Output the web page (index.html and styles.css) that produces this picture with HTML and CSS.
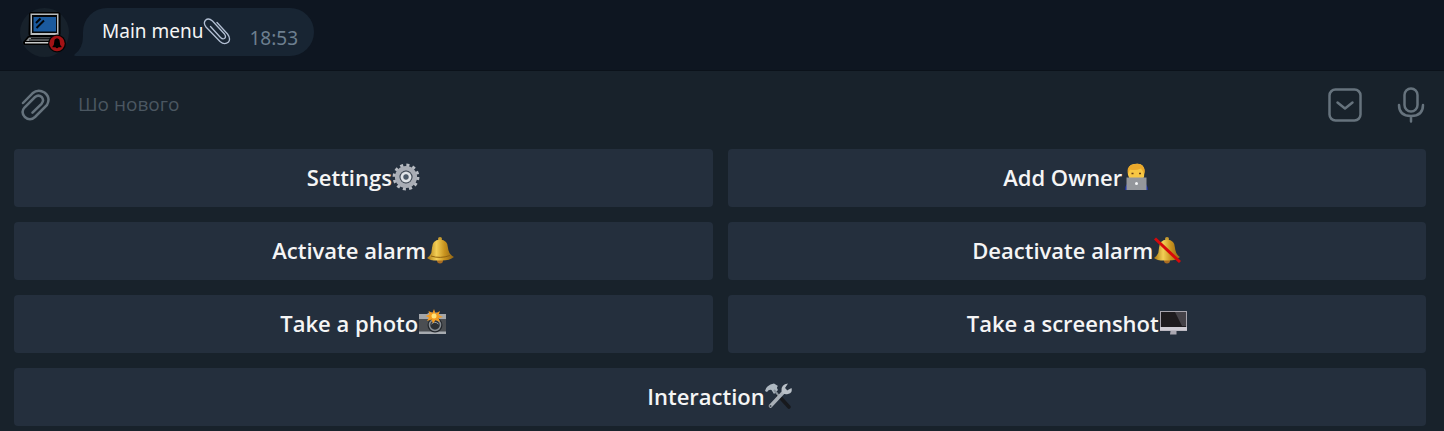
FILE: index.html
```html
<!DOCTYPE html>
<html lang="en">
<head>
<meta charset="utf-8">
<title>Main menu</title>
<link rel="stylesheet" href="styles.css">
</head>
<body>
<main class="chat">
  <svg class="avatar" viewBox="0 0 49 49" aria-hidden="true">
    <circle cx="24.500" cy="24.500" r="24.500" fill="#17212b"/>
    <path d="M9 6.500Q9 4 11.500 4H37.500Q40.500 4 40.500 6.500V26Q40.500 28 38.500 28H10Q8.500 28 8.500 26Z" fill="#000"/>
    <path d="M10.500 5.500H38.500V27H10.500Z" fill="#b9bcbd"/>
    <path d="M12 7H37V25H12Z" fill="#050607"/>
    <path d="M13.500 9H36V23.500H13.500Z" fill="#1b5a9e"/>
    <path d="M16 15L20.500 10.500M16.500 20L24 12.500" stroke="#02060a" stroke-width="2" fill="none"/>
    <path d="M8 28H40L36 37H5Q3 37 3 34Z" fill="#000"/>
    <path d="M9 29.500H34L31 33H6Z" fill="#8c8f91"/>
    <path d="M11 30.500H32M9 32H30" stroke="#17191b" stroke-width="1"/>
    <path d="M5 34H31V35.500H5Z" fill="#c8caca"/>
    <circle cx="37" cy="35.500" r="9" fill="#050505"/>
    <circle cx="37" cy="35.500" r="7.700" fill="#a31215"/>
    <path d="M32.500 38.500Q34.300 37 34.300 33.500Q34.300 30.800 37 30.300Q39.700 30.800 39.700 33.500Q39.700 37 41.500 38.500V39.300H38.500Q37 41 35.500 39.300H32.500Z" fill="#000"/>
  </svg>
  <div class="bubble">
    <svg class="tail" viewBox="0 0 34 24" aria-hidden="true"><path d="M9 0V4Q9 16 1 22Q-1 24 2 24H34V0Z" fill="#182533"/></svg>
    <span class="message">Main menu<svg class="emoji" viewBox="0 0 28 28" aria-hidden="true"><g fill="none" stroke="#b3c0d4" stroke-width="1.300" stroke-linecap="round"><path d="M14 5.500L24.500 17Q28 21.500 25.500 25Q21.500 28.500 17 24.500L3 10Q0 6 2.500 3.200Q5.500 .5 9.500 4L21.500 17Q23.500 20 21.500 21.500Q19.500 22.500 17.500 20.500L7.500 9.500"/></g></svg></span>
    <time class="time">18:53</time>
  </div>
</main>
<form class="compose">
  <button class="icon-button" type="button" aria-label="Attach">
    <svg width="32" height="34" viewBox="0 0 32 34"><path d="M3 15L12.500 5.300Q18 .5 24.500 4.500Q31 9.500 27 17L15 29Q10 33.500 4.800 29Q.5 24 4.500 19.500L15 9Q18.500 6.300 21.700 9Q24.500 12.500 21.500 15.800L12.500 24.700" fill="none" stroke="#66737d" stroke-width="2.500" stroke-linecap="round"/></svg>
  </button>
  <input class="field" type="text" placeholder="Шо нового" aria-label="Шо нового">
  <button class="icon-button" type="button" aria-label="Hide keyboard">
    <svg width="34" height="34" viewBox="0 0 34 34"><g fill="none" stroke="#66737d" stroke-width="2.500" stroke-linecap="round" stroke-linejoin="round"><rect x="1.500" y="1.500" width="31" height="31" rx="6"/><path d="M9.500 14.500L17 20.500L24.500 14.500"/></g></svg>
  </button>
  <button class="icon-button" type="button" aria-label="Record voice message">
    <svg width="28" height="36" viewBox="0 0 28 36"><g fill="none" stroke="#66737d" stroke-width="2.500" stroke-linecap="round"><rect x="7.500" y="1.500" width="13" height="23" rx="6.500"/><path d="M2 18Q2 29 14 29Q26 29 26 18M14 29V34.500"/></g></svg>
  </button>
</form>
<section class="keyboard" aria-label="Bot keyboard">
  <button class="key" type="button">Settings<svg class="emoji" viewBox="0 0 28 28" aria-hidden="true">
    <circle cx="14" cy="14" r="11.700" fill="none" stroke="#b7bbc2" stroke-width="3.400" stroke-dasharray="3 3.126"/>
    <circle cx="14" cy="14" r="8.800" fill="none" stroke="#a9adb5" stroke-width="4.600"/>
    <circle cx="14" cy="14" r="6" fill="#697079"/>
    <circle cx="14" cy="14" r="4" fill="none" stroke="#dfe3e7" stroke-width="2.600"/>
    <circle cx="14" cy="14" r="2.400" fill="#4c5a69"/></svg></button>
  <button class="key" type="button">Add Owner<svg class="emoji" viewBox="0 0 28 28" aria-hidden="true">
    <path d="M3 27Q3 20 9 19H20Q25.500 20 26 27Z" fill="#1d35aa"/>
    <path d="M6 12Q5 2 12 1Q22-1 22.500 8L22 14Q20 19 14 19Q8 19 6 12Z" fill="#f7c744"/>
    <path d="M6 11Q4 3 11 1.500Q20-1 22.500 6Q23 9 22 11Q21 8 19 5.500Q13 8 8 6.500Q7 8 6 11Z" fill="#eba92c"/>
    <path d="M9.500 10.500h2M17 10.500h2" stroke="#673d12" stroke-width="1.600"/>
    <path d="M4.500 14.500H24.500V27H4.500Z" fill="#94979c"/><circle cx="14.500" cy="20.500" r="1.500" fill="#f6f7f8"/></svg></button>
  <button class="key" type="button">Activate alarm<svg class="emoji" viewBox="0 0 28 28" aria-hidden="true">
    <defs><linearGradient id="gold"><stop offset="0" stop-color="#a87510"/><stop offset=".35" stop-color="#f3ce55"/><stop offset=".65" stop-color="#c8931e"/><stop offset="1" stop-color="#8f6214"/></linearGradient></defs>
    <circle cx="14" cy="3" r="2" fill="#c59a31"/><circle cx="14" cy="24.500" r="3" fill="#a96c22"/>
    <path d="M1 22Q6 19 6 12Q6 4 14 3.500Q22 4 22 12Q22.500 18 28 21Q23 25 14 24.500Q4 25 1 22Z" fill="url(#gold)"/>
    <path d="M5 20Q14 23 24 19.500" fill="none" stroke="#92630f" stroke-width="1"/></svg></button>
  <button class="key" type="button">Deactivate alarm<svg class="emoji" viewBox="0 0 28 28" aria-hidden="true">
    <circle cx="14" cy="3" r="2" fill="#c59a31"/><circle cx="14" cy="24.500" r="3" fill="#a96c22"/>
    <path d="M1 22Q6 19 6 12Q6 4 14 3.500Q22 4 22 12Q22.500 18 27 21Q23 25 14 24.500Q4 25 1 22Z" fill="url(#gold)"/>
    <path d="M2 2.500L27 26" stroke="#d8080b" stroke-width="3"/></svg></button>
  <button class="key" type="button">Take a photo<svg class="emoji" viewBox="0 0 28 28" aria-hidden="true">
    <path d="M1 5H28V25H1Z" fill="#4b4e52"/><path d="M1 5H9L11 3.500H19L21 5H28V10H1Z" fill="#a2a5a9"/><path d="M1 22.500H28V25H1Z" fill="#a7abb0"/>
    <circle cx="17" cy="16" r="7.500" fill="#24282d"/><circle cx="17" cy="16" r="5.500" fill="#2b2f34" stroke="#858b91" stroke-width="1.500"/><path d="M13.500 15Q16.500 11.500 20.500 15" fill="none" stroke="#9aa4ad"/>
    <path d="M16 0L17.500 4.500L22 2L20.500 6L25 8L20.500 9L22 13L17.500 11L15 14.500L13.500 10.500L9 12L11 8.500L7.500 7L11.500 5.500L10.500 2L14.500 4Z" fill="#f39b20"/><circle cx="16" cy="7" r="2.500" fill="#ffe37a"/></svg></button>
  <button class="key" type="button">Take a screenshot<svg class="emoji" viewBox="0 0 28 28" aria-hidden="true">
    <path d="M1 2H28V22H1Z" fill="#a7a4ad"/><path d="M2 3H27V18H2Z" fill="#1e1b1e"/><path d="M16 3H27V17H23Z" fill="#454248"/><path d="M1 18H28V21.500H1Z" fill="#cfccd4"/><path d="M11.500 22H17.500V25.500H11Z" fill="#aaa7b1"/></svg></button>
  <button class="key key-wide" type="button">Interaction<svg class="emoji" viewBox="0 0 28 28" aria-hidden="true">
    <path d="M13 13L24 25" stroke="#17191d" stroke-width="3.600" stroke-linecap="round"/>
    <path d="M0 9Q1 3 9 1.500L13 4Q11 5 13 8L9 12L6.500 8Q4 7 2 10Z" fill="#aeb8c1"/><path d="M9 8L15 15" stroke="#87919b" stroke-width="2"/>
    <path d="M5.500 24L20 8.500" stroke="#a8afb7" stroke-width="3.600" stroke-linecap="round"/>
    <path d="M23 1.500L20 6L22 8.500L26.500 6Q28 11 23 12Q18 13 16.500 9Q16 2 23 1.500Z" fill="#b9c0c7"/><circle cx="5.500" cy="24" r="1" fill="#454d56"/></svg></button>
</section>
</body>
</html>
```
FILE: styles.css
```css
* {
  box-sizing: border-box;
}

body {
  margin: 0;
  background: #18222b;
  color: #f5f5f5;
  font-family: "Open Sans", "Noto Sans", sans-serif;
}

button,
input {
  border: 0;
  padding: 0;
  background: none;
  color: inherit;
  font: inherit;
}

button {
  cursor: pointer;
}

.chat {
  display: flex;
  gap: 14px;
  padding: 8px 20px 13px;
  background: #0e1621;
  border-bottom: 1px solid #0b121a;
}

.avatar {
  width: 49px;
  height: 49px;
}

.bubble {
  position: relative;
  display: flex;
  gap: 18px;
  height: 48px;
  padding: 0 16px 0 19px;
  border-radius: 24px;
  background: #182533;
}

.tail {
  position: absolute;
  left: -9px;
  bottom: 0;
  width: 34px;
  height: 24px;
}

.message {
  position: relative;
  display: flex;
  font-family: "Noto Sans", "Open Sans", sans-serif;
  font-size: 19px;
  line-height: 46px;
}

.message .emoji {
  margin-top: 9px;
}

.time {
  padding-top: 7px;
  color: #6d7f8f;
  font-family: "Noto Sans", "Open Sans", sans-serif;
  font-size: 19px;
  line-height: 46px;
}

.compose {
  display: flex;
  align-items: center;
  gap: 35px;
  height: 70px;
  padding: 0 19px 2px 20px;
}

.icon-button {
  display: flex;
}

.field {
  flex: 1;
  min-width: 0;
  margin-left: -9px;
  padding-bottom: 2px;
  outline: 0;
  font-size: 19px;
  line-height: 26px;
}

.field::placeholder {
  color: #4b5761;
  opacity: 1;
}

.keyboard {
  display: grid;
  grid-template-columns: 1fr 1fr;
  gap: 15px;
  padding: 8px 18px 6px 14px;
}

.key {
  display: flex;
  align-items: center;
  justify-content: center;
  height: 58px;
  padding-bottom: 3px;
  border-radius: 4px;
  background: #242f3d;
  font-size: 22px;
  font-weight: 600;
  line-height: 30px;
}

.key-wide {
  grid-column: 1 / -1;
}

.emoji {
  flex: none;
  width: 28px;
  height: 28px;
}
```
